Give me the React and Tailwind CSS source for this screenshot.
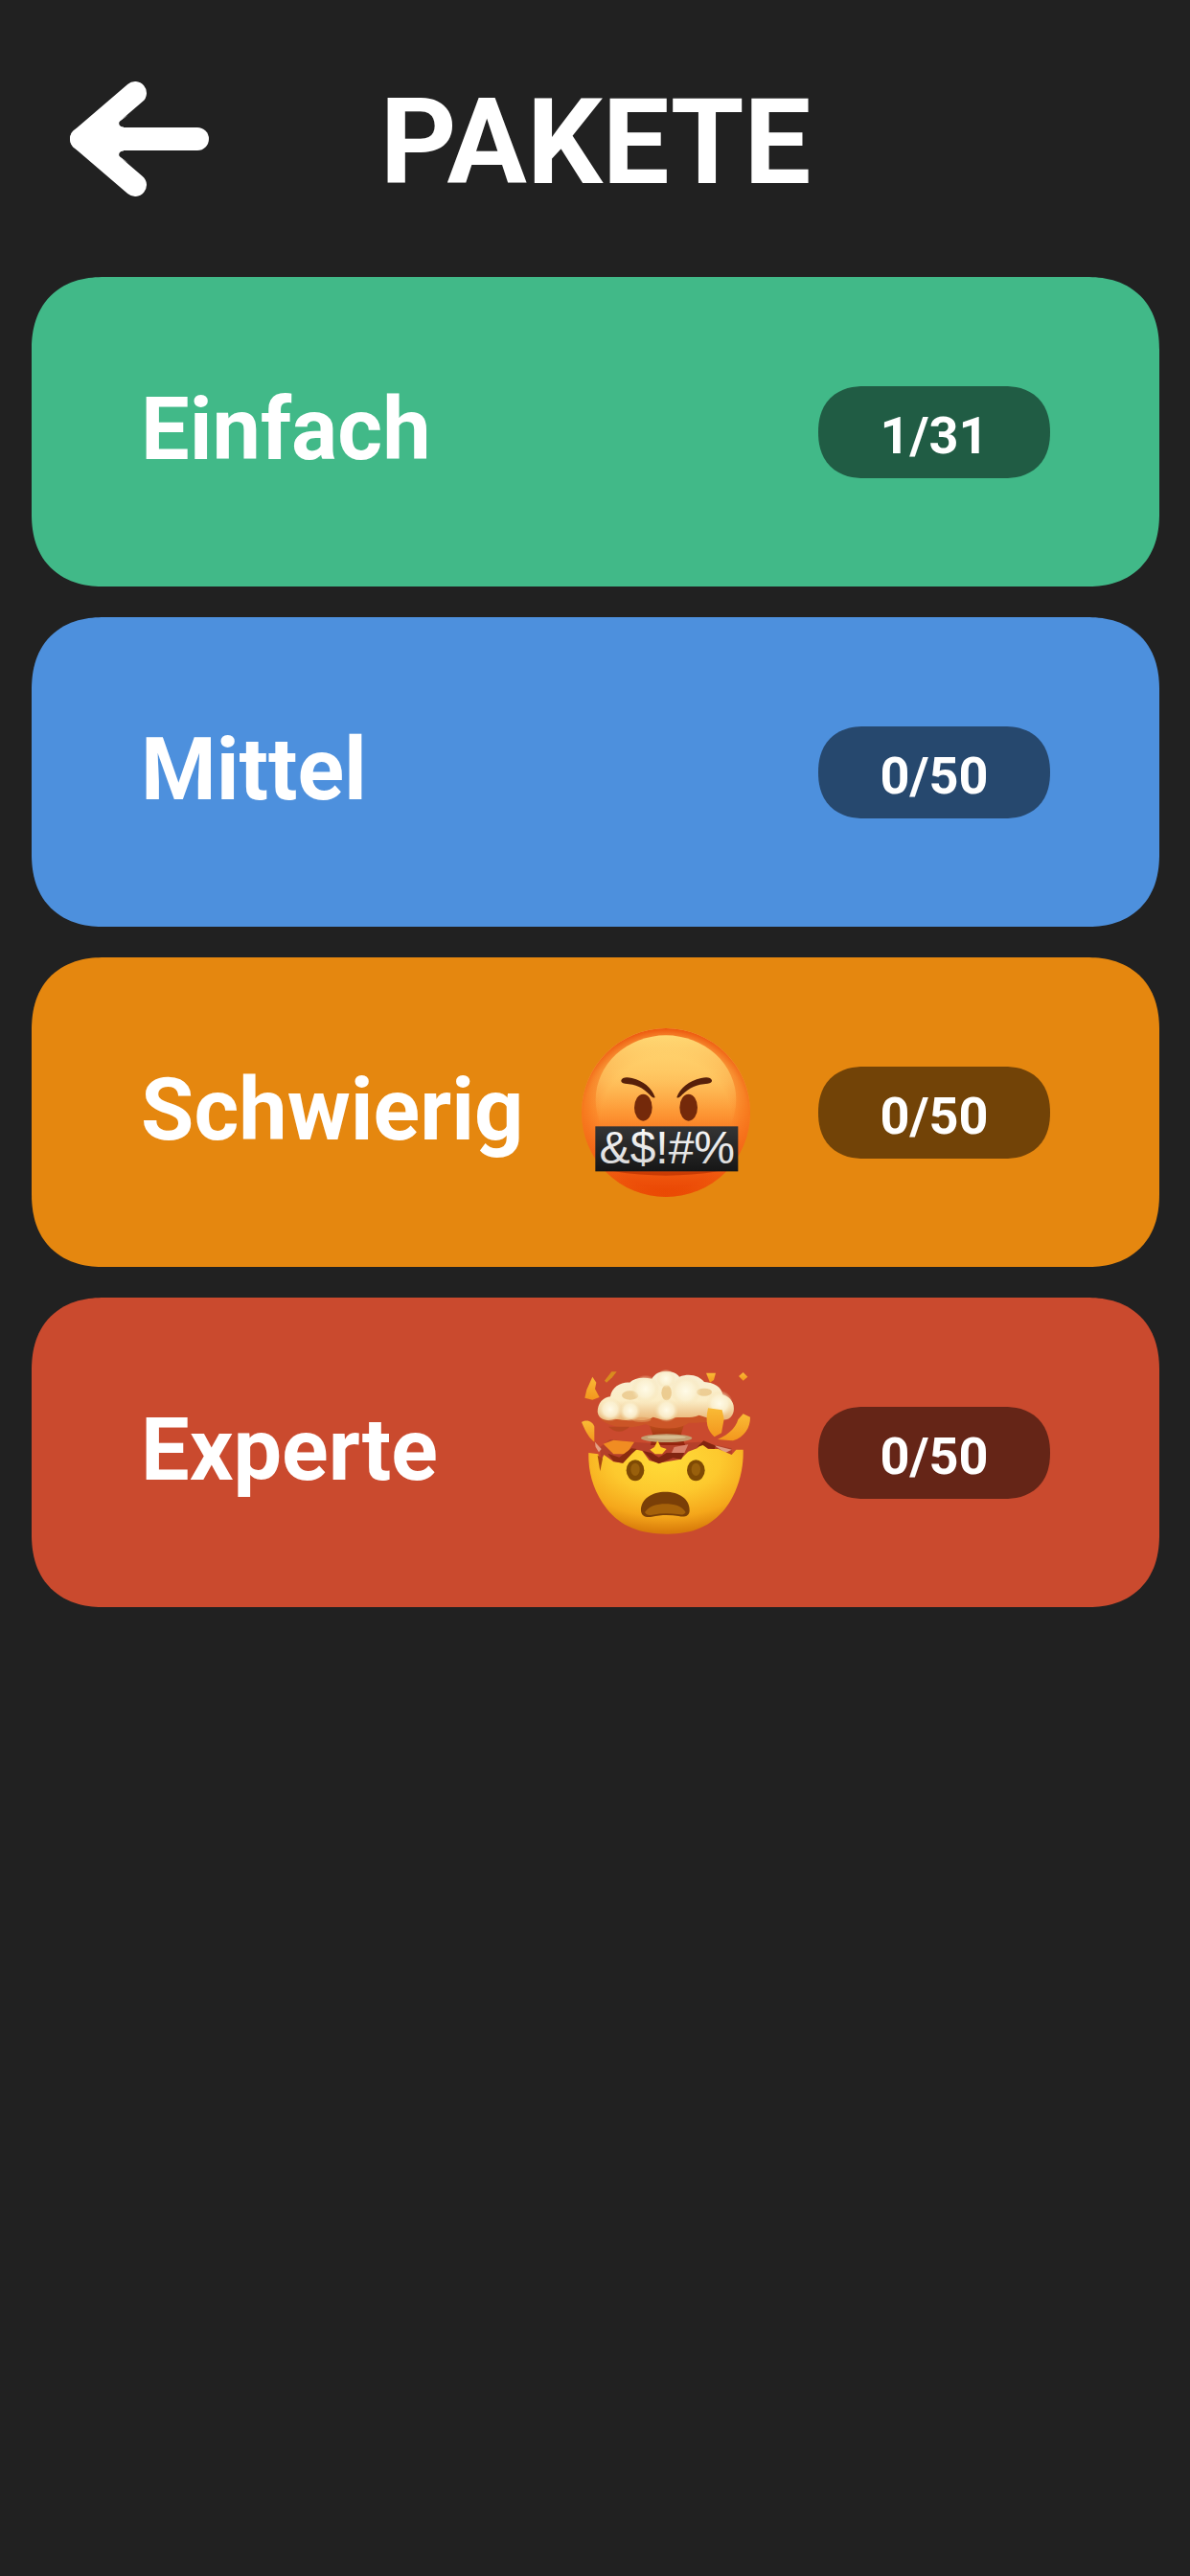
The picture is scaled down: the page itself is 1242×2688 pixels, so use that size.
const BackArrow = () => (
  <svg viewBox="0 0 146 122" className="w-[146px] h-[122px]" fill="none" stroke="#fff" strokeWidth="24" strokeLinecap="round" strokeLinejoin="round">
    <path d="M69 13 L13 61 L69 109" />
    <path d="M13 61 H134" />
    <path d="M20 61 L62 36 L53 42.500 C51 45 53 48.500 57 48.500 V73.500 C53 73.500 51 77 53 79.500 L62 86 Z" fill="#fff" stroke="none" />
  </svg>
)


const SwearingFace = () => (
  <svg viewBox="49 46 528 528" className="w-44 h-44 shrink-0" role="img" aria-label="Schimpfendes Gesicht">
    <defs>
      <linearGradient id="swear-face" x1="0" y1="0" x2="0" y2="1">
        <stop offset="0" stopColor="#ffcc66" />
        <stop offset="0.25" stopColor="#ffbe58" />
        <stop offset="0.5" stopColor="#fd912f" />
        <stop offset="0.75" stopColor="#f5661a" />
        <stop offset="1" stopColor="#e84300" />
      </linearGradient>
      <radialGradient id="swear-rim" cx="0.5" cy="0.56" r="0.56">
        <stop offset="0.7" stopColor="#f2600f" stopOpacity="0" />
        <stop offset="0.88" stopColor="#f2660f" stopOpacity="0.55" />
        <stop offset="1" stopColor="#ec4f08" stopOpacity="0.95" />
      </radialGradient>
      <linearGradient id="swear-shine" x1="0" y1="0" x2="0" y2="1">
        <stop offset="0" stopColor="#ffd873" />
        <stop offset="0.35" stopColor="#ffcb66" stopOpacity="0.6" />
        <stop offset="0.7" stopColor="#ffb04a" stopOpacity="0" />
      </linearGradient>
      <linearGradient id="swear-bar" x1="0" y1="0" x2="0" y2="1">
        <stop offset="0" stopColor="#353535" />
        <stop offset="1" stopColor="#161616" />
      </linearGradient>
      <linearGradient id="swear-text" x1="0" y1="0" x2="0" y2="1">
        <stop offset="0" stopColor="#ffffff" />
        <stop offset="1" stopColor="#d2d2d2" />
      </linearGradient>
    </defs>
    <circle cx="313" cy="310" r="264" fill="url(#swear-face)" />
    <circle cx="313" cy="310" r="264" fill="url(#swear-rim)" />
    <ellipse cx="313" cy="270" rx="220" ry="202" fill="url(#swear-shine)" />
    <path d="M150 494 H476 Q313 520 150 494 Z" fill="#b93100" opacity="0.7" />
    <ellipse cx="242" cy="294" rx="28" ry="42" fill="#74290a" />
    <ellipse cx="384" cy="294" rx="28" ry="42" fill="#74290a" />
    <path d="M173 209 C176 199 190 198 207 202 C243 211 268 231 279 262 C275 267 268 261 262 254 C241 231 219 221 185 219 C176 218 172 214 173 209 Z" fill="#57200a" />
    <path d="M457 209 C454 199 440 198 423 202 C385 211 357 233 347 262 C351 267 358 261 364 254 C387 231 410 221 444 219 C453 218 458 214 457 209 Z" fill="#57200a" />
    <rect x="92" y="353" width="447" height="141" fill="url(#swear-bar)" />
    <text x="317" y="470" textAnchor="middle" fontFamily="'Liberation Sans', sans-serif" fontWeight="400" fontSize="144" fill="url(#swear-text)">&amp;$!#%</text>
  </svg>
)


const ExplodingHead = () => (
  <svg viewBox="50 54 528 528" className="w-44 h-44 shrink-0" role="img" aria-label="Explodierender Kopf">
    <defs>
      <radialGradient id="boom-face" cx="0.5" cy="0.2" r="0.78">
        <stop offset="0" stopColor="#ffdc38" />
        <stop offset="0.45" stopColor="#fdc92e" />
        <stop offset="0.78" stopColor="#f5a71b" />
        <stop offset="1" stopColor="#d97c0a" />
      </radialGradient>
      <linearGradient id="boom-cloud" x1="0" y1="0" x2="0" y2="1">
        <stop offset="0" stopColor="#f8efd5" />
        <stop offset="0.6" stopColor="#fbedc6" />
        <stop offset="1" stopColor="#e9b576" />
      </linearGradient>
      <radialGradient id="boom-puff">
        <stop offset="0" stopColor="#fffbe8" />
        <stop offset="0.6" stopColor="#fbf1d2" stopOpacity="0.85" />
        <stop offset="1" stopColor="#f4dfae" stopOpacity="0" />
      </radialGradient>
      <linearGradient id="boom-stem" x1="0" y1="0" x2="0" y2="1">
        <stop offset="0" stopColor="#c2561d" />
        <stop offset="1" stopColor="#92220e" />
      </linearGradient>
      <linearGradient id="boom-shard" x1="0" y1="0" x2="0" y2="1">
        <stop offset="0" stopColor="#f9bb36" />
        <stop offset="1" stopColor="#f3961d" />
      </linearGradient>
    </defs>
    <path d="M108 300 L140 276 L210 284 L300 290 L420 284 L520 304 L520 350 L110 350 Z" fill="#b5402a" />
    <path d="M118 290 L150 278 L215 284 L190 322 L150 322 Z" fill="#f08c22" />
    <path d="M340 300 L384 292 L372 318 L330 322 Z" fill="#d8806a" />
    <path d="M464 294 L520 308 L500 318 Z" fill="#e09a80" />
    <path d="M72 318 L102 322 L108 350 L120 324 L150 346 L178 350 L212 306 L240 312 L262 342 L292 350 L360 338 L384 314 L412 304 L432 286 L446 306 L478 306 L520 324 L534 308 L556 308 C558 370 540 440 500 492 C454 548 400 572 318 572 C232 572 172 548 128 492 C88 440 70 380 72 318 Z" fill="url(#boom-face)" />
    <path d="M100 326 L108 376 L116 336 Z" fill="#a84710" />
    <path d="M132 320 L168 332 L206 304 L224 306 L208 320 L180 350 L150 344 Z" fill="#8b2b10" />
    <path d="M242 312 L268 318 L292 332 L316 318 L372 318 L362 338 L336 334 L292 352 L270 342 Z" fill="#812511" />
    <path d="M412 300 L432 280 L470 296 L466 306 L444 304 L430 294 Z" fill="#82240f" />
    <path d="M258 220 H374 L362 258 L374 294 L266 294 L272 258 Z" fill="url(#boom-stem)" />
    <ellipse cx="316" cy="272" rx="80" ry="13" fill="#c39d70" />
    <ellipse cx="316" cy="269" rx="60" ry="6" fill="#d7bd91" />
    <path d="M288 280 L298 300 L316 306 L302 322 L280 322 L264 308 L278 300 Z" fill="#ffc928" />
    <path d="M110 214 C150 246 210 242 250 228 C290 246 350 248 386 224 C430 226 480 220 512 208 L440 190 L170 190 Z" fill="#cb5527" />
    <path d="M134 236 C160 260 184 252 200 236 Z" fill="#b64620" />
    <path d="M100 190 C100 162 118 144 140 142 C144 112 174 96 200 98 C216 82 242 80 270 86 C282 66 300 62 320 64 C340 64 350 72 356 80 C390 66 420 78 434 96 C466 98 488 112 492 136 C518 144 530 164 526 188 C522 208 506 218 488 214 C462 218 440 206 418 200 C390 212 362 204 342 208 C318 222 296 212 274 206 C248 222 220 214 204 214 C178 220 156 208 148 214 C120 222 102 208 100 190 Z" fill="url(#boom-cloud)" />
    <ellipse cx="202" cy="138" rx="26" ry="14" fill="#dfb063" opacity="0.5" />
    <ellipse cx="316" cy="130" rx="16" ry="24" fill="#e2b56b" opacity="0.6" />
    <ellipse cx="434" cy="128" rx="24" ry="12" fill="#dfae60" opacity="0.5" />
    <ellipse cx="238" cy="214" rx="30" ry="8" fill="#e29a5c" opacity="0.6" />
    <circle cx="140" cy="182" r="38" fill="url(#boom-puff)" />
    <circle cx="202" cy="186" r="34" fill="url(#boom-puff)" />
    <circle cx="250" cy="118" r="44" fill="url(#boom-puff)" />
    <circle cx="314" cy="86" r="30" fill="url(#boom-puff)" />
    <circle cx="376" cy="124" r="48" fill="url(#boom-puff)" />
    <circle cx="316" cy="184" r="38" fill="url(#boom-puff)" />
    <circle cx="482" cy="164" r="42" fill="url(#boom-puff)" />
    <path d="M84 80 L96 98 L92 118 L106 144 L84 152 L60 146 L66 120 Z" fill="url(#boom-shard)" />
    <path d="M122 92 L144 64 H160 L146 82 L128 98 Z" fill="#d98b1e" />
    <path d="M440 68 H470 L464 90 L452 98 Z" fill="url(#boom-shard)" />
    <path d="M542 78 L556 66 L570 80 L556 92 Z" fill="url(#boom-shard)" />
    <path d="M50 222 C68 212 84 220 90 236 V284 C76 274 64 256 50 222 Z" fill="url(#boom-shard)" />
    <path d="M92 284 L112 306 L104 316 L94 300 Z" fill="#e3a184" />
    <path d="M446 178 L490 184 L496 212 L488 256 L466 268 C444 250 436 222 446 178 Z" fill="url(#boom-shard)" />
    <path d="M556 196 L578 206 C578 240 560 268 524 280 L476 276 C510 262 534 238 540 214 Z" fill="url(#boom-shard)" />
    <ellipse cx="218" cy="373" rx="28" ry="33" fill="#7f4a04" />
    <ellipse cx="218" cy="370" rx="14" ry="20" fill="#99600c" />
    <ellipse cx="408" cy="373" rx="28" ry="33" fill="#7f4a04" />
    <ellipse cx="408" cy="370" rx="14" ry="20" fill="#99600c" />
    <path d="M236 500 C234 462 272 440 312 440 C354 440 390 462 388 500 C386 518 370 520 354 516 C326 512 298 512 270 518 C252 522 238 516 236 500 Z" fill="#7a3f07" />
    <path d="M248 504 C262 484 286 478 312 478 C340 478 364 484 376 504 C370 514 360 512 350 510 C324 507 298 507 272 512 C260 514 252 512 248 504 Z" fill="#a5610a" />
  </svg>
)


const packs = [
  { name: "Einfach", solved: 1, total: 31, color: "bg-[#41b988]" },
  { name: "Mittel", solved: 0, total: 50, color: "bg-[#4d90dd]" },
  { name: "Schwierig", solved: 0, total: 50, color: "bg-[#e5870f]", icon: <SwearingFace /> },
  { name: "Experte", solved: 0, total: 50, color: "bg-[#ca4a2e]", icon: <ExplodingHead /> },
]


const PackItem = ({ pack }) => (
  <li>
    <button
      type="button"
      className={`${pack.color} flex w-full h-[323px] items-center rounded-[76px] [corner-shape:superellipse(1.2)] px-[114px] text-left cursor-pointer`}>
      <span className="flex-1 text-[90px] leading-[104px] pb-1">{pack.name}</span>
      {pack.icon}
      <span className="ml-[71px] flex w-[242px] h-24 shrink-0 items-center justify-center rounded-[48px] [corner-shape:superellipse(1.2)] bg-black/50 pt-2 text-[54px] leading-[64px]">
        {pack.solved}/{pack.total}
      </span>
    </button>
  </li>
)


const App = () => {
  return (
    <div className="min-h-screen bg-[#212121] pl-[33px] pr-8 font-['Roboto',sans-serif] font-bold text-white">
      <header className="grid grid-cols-[1fr_auto_1fr] items-center h-[289px]">
        <button type="button" aria-label="Zurück" className="justify-self-start ml-[39px] cursor-pointer">
          <BackArrow />
        </button>
        <h1 className="pt-2 text-[124px] leading-[144px]">PAKETE</h1>
      </header>
      <main>
        <ul className="flex flex-col gap-8">
          {packs.map((pack) => (
            <PackItem key={pack.name} pack={pack} />
          ))}
        </ul>
      </main>
    </div>
  )
}

export default App
